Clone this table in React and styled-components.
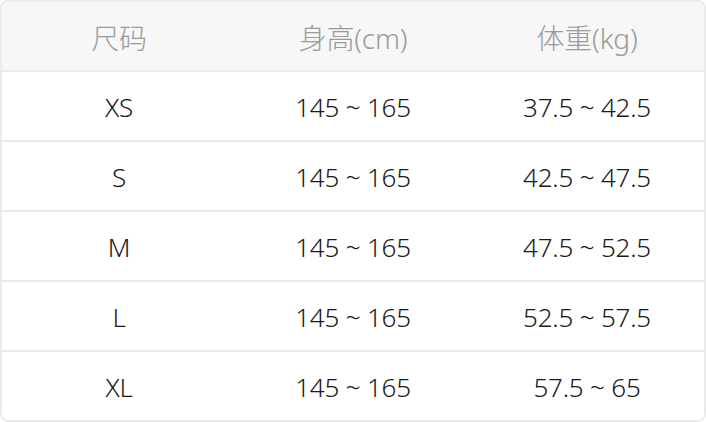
import React from "react";
import styled, { createGlobalStyle } from "styled-components";

const Global = createGlobalStyle`
  html, body { margin: 0; padding: 0; background: #ffffff; }
  body { font-family: "Noto Sans", "Noto Sans CJK SC", sans-serif; }
`;

const Table = styled.div`
  box-sizing: border-box;
  width: 706px;
  border: 2px solid #ebebeb;
  border-radius: 8px;
  overflow: hidden;
  background: #ffffff;
`;

const Row = styled.div`
  display: grid;
  grid-template-columns: repeat(3, 1fr);
  height: 68px;
  background: ${(p) => (p.$head ? "#f7f7f7" : "#ffffff")};
  border-top: ${(p) => (p.$head ? "none" : "2px solid #ebebeb")};
`;

const Cell = styled.div`
  display: flex;
  align-items: center;
  justify-content: center;
  padding-top: 1px;
  font-size: ${(p) => (p.$head ? "28px" : "26px")};
  font-weight: 300;
  letter-spacing: -0.2px;
  color: ${(p) => (p.$head ? "#9a9a9a" : "#1a1a1a")};
  font-family: "Noto Sans", "Noto Sans CJK SC", sans-serif;
`;

const rows = [
  ["XS", "145 ~ 165", "37.5 ~ 42.5"],
  ["S", "145 ~ 165", "42.5 ~ 47.5"],
  ["M", "145 ~ 165", "47.5 ~ 52.5"],
  ["L", "145 ~ 165", "52.5 ~ 57.5"],
  ["XL", "145 ~ 165", "57.5 ~ 65"],
];

export default function App() {
  return (
    <>
      <Global />
      <Table>
        <Row $head>
          <Cell $head>尺码</Cell>
          <Cell $head>身高(cm)</Cell>
          <Cell $head>体重(kg)</Cell>
        </Row>
        {rows.map((r) => (
          <Row key={r[0]}>
            {r.map((c, i) => (
              <Cell key={i}>{c}</Cell>
            ))}
          </Row>
        ))}
      </Table>
    </>
  );
}
